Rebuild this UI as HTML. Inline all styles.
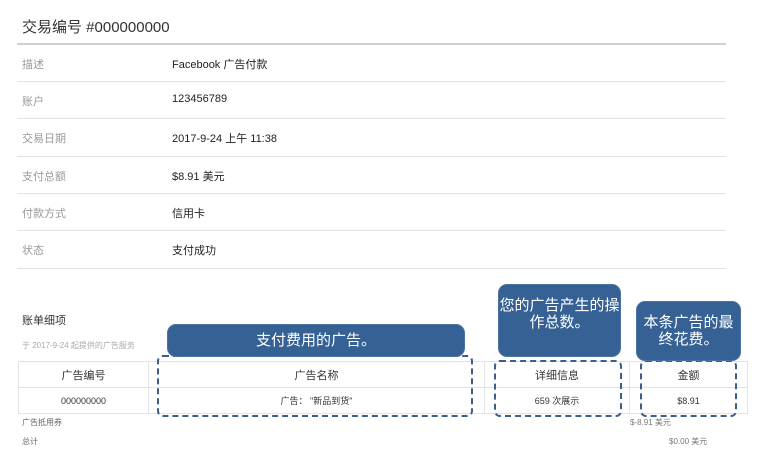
<!DOCTYPE html>
<html><head><meta charset="utf-8"><style>
*{margin:0;padding:0;box-sizing:border-box}
body{width:780px;height:470px;background:#fff;font-family:"Liberation Sans","Noto Sans CJK SC",sans-serif;position:relative;overflow:hidden;color:#222}
.a{position:absolute;white-space:nowrap}
.hl{position:absolute;left:17px;width:709px;height:1px;background:#e3e3e3}
.lb{position:absolute;left:22px;font-size:11px;color:#999}
.vl{position:absolute;left:172px;font-size:11px;color:#222}
.call{position:absolute;background:#356195;border-radius:9px;color:#fff;text-align:center;font-size:15px;line-height:17px;display:flex;align-items:center;justify-content:center;border:1px solid #4a72a3}
.dash{position:absolute;border:2px dashed #3a5f8c;border-radius:6px}
td{border:1px solid #e3e3e3;text-align:center;font-size:9px;color:#333}
</style></head><body>
<div class="a" style="left:22px;top:16px;font-size:15px;color:#333">交易编号 #000000000</div>
<div class="hl" style="top:43px;height:2px;background:#d0d0d0"></div>
<div class="lb" style="top:56px">描述</div><div class="vl" style="top:56px">Facebook 广告付款</div>
<div class="hl" style="top:81px"></div>
<div class="lb" style="top:93px">账户</div><div class="vl" style="top:93px">123456789</div>
<div class="hl" style="top:118px"></div>
<div class="lb" style="top:130px">交易日期</div><div class="vl" style="top:130px">2017-9-24 上午 11:38</div>
<div class="hl" style="top:156px"></div>
<div class="lb" style="top:168px">支付总额</div><div class="vl" style="top:168px">$8.91 美元</div>
<div class="hl" style="top:193px"></div>
<div class="lb" style="top:205px">付款方式</div><div class="vl" style="top:205px">信用卡</div>
<div class="hl" style="top:230px"></div>
<div class="lb" style="top:242px">状态</div><div class="vl" style="top:242px">支付成功</div>
<div class="hl" style="top:268px"></div>
<div class="a" style="left:22px;top:312px;font-size:11px;color:#333">账单细项</div>
<div class="a" style="left:22px;top:340px;font-size:8px;color:#aaa">于 2017-9-24 起提供的广告服务</div>
<table style="position:absolute;left:18px;top:361px;width:730px;border-collapse:collapse">
<tr style="height:26px"><td style="width:130px;font-size:11px">广告编号</td><td style="width:336px;font-size:11px">广告名称</td><td style="width:145px;font-size:11px">详细信息</td><td style="font-size:11px">金额</td></tr>
<tr style="height:26px"><td>000000000</td><td>广告： "新品到货"</td><td>659 次展示</td><td>$8.91</td></tr>
</table>
<div class="a" style="left:22px;top:417px;font-size:8px;color:#666">广告抵用券</div>
<div class="a" style="left:22px;top:436px;font-size:8px;color:#666">总计</div>
<div class="a" style="left:630px;top:417px;font-size:8px;color:#777">$-8.91 美元</div>
<div class="a" style="left:669px;top:436px;font-size:8px;color:#777">$0.00 美元</div>
<div class="dash" style="left:157px;top:355px;width:316px;height:62px"></div>
<div class="dash" style="left:494px;top:360px;width:128px;height:57px"></div>
<div class="dash" style="left:640px;top:360px;width:97px;height:57px"></div>
<div class="call" style="left:167px;top:324px;width:298px;height:33px">支付费用的广告。</div>
<div class="call" style="left:498px;top:284px;width:123px;height:73px;padding-bottom:14px">您的广告产生的操<br>作总数。</div>
<div class="call" style="left:636px;top:301px;width:105px;height:60px">本条广告的最<br>终花费。</div>
</body></html>
